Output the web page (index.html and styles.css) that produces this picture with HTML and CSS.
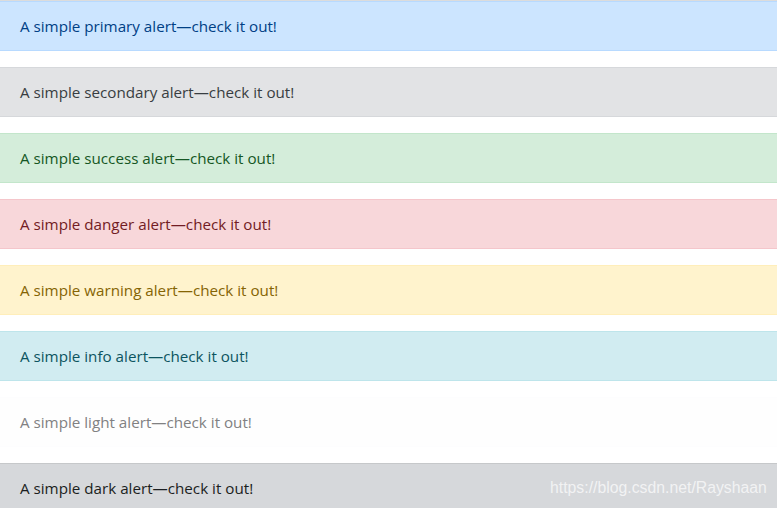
FILE: index.html
```html
<!DOCTYPE html>
<html>
<head>
<meta charset="utf-8">
<link rel="stylesheet" href="styles.css">
</head>
<body>
<div class="page">
  <div class="alert alert-primary">A simple primary alert—check it out!</div>
  <div class="alert alert-secondary">A simple secondary alert—check it out!</div>
  <div class="alert alert-success">A simple success alert—check it out!</div>
  <div class="alert alert-danger">A simple danger alert—check it out!</div>
  <div class="alert alert-warning">A simple warning alert—check it out!</div>
  <div class="alert alert-info">A simple info alert—check it out!</div>
  <div class="alert alert-light">A simple light alert—check it out!</div>
  <div class="alert alert-dark">A simple dark alert—check it out!</div>
</div>
<div class="watermark">https://blog.csdn.net/Rayshaan</div>
</body>
</html>
```
FILE: styles.css
```css
html, body {
  margin: 0;
  padding: 0;
  background: #fff;
  overflow: hidden;
  height: 508px;
}
.page {
  border-top: 1px solid #dcdcdc;
  overflow: hidden;
  font-family: "Open Sans", "Segoe UI", sans-serif;
  font-size: 15.2px;
  line-height: 24px;
}
.alert {
  margin: 0 -1px 16px -1px;
  padding: 12px 20px;
  border: 1px solid transparent;
}
.alert-primary { color: #004085; background: #cce5ff; border-color: #b8daff; }
.alert-secondary { color: #383d41; background: #e2e3e5; border-color: #d6d8db; }
.alert-success { color: #155724; background: #d4edda; border-color: #c3e6cb; }
.alert-danger { color: #721c24; background: #f8d7da; border-color: #f5c6cb; }
.alert-warning { color: #856404; background: #fff3cd; border-color: #ffeeba; }
.alert-info { color: #0c5460; background: #d1ecf1; border-color: #bee5eb; }
.alert-light { color: #818182; background: #fefefe; border-color: #fdfdfe; }
.alert-dark { color: #1b1e21; background: #d6d8db; border-color: #c6c8ca; }
.watermark {
  position: absolute;
  left: 550px;
  top: 478px;
  font-family: "Liberation Sans", Arial, sans-serif;
  font-size: 15.8px;
  line-height: 20px;
  color: rgba(255, 255, 255, 0.7);
}
```
